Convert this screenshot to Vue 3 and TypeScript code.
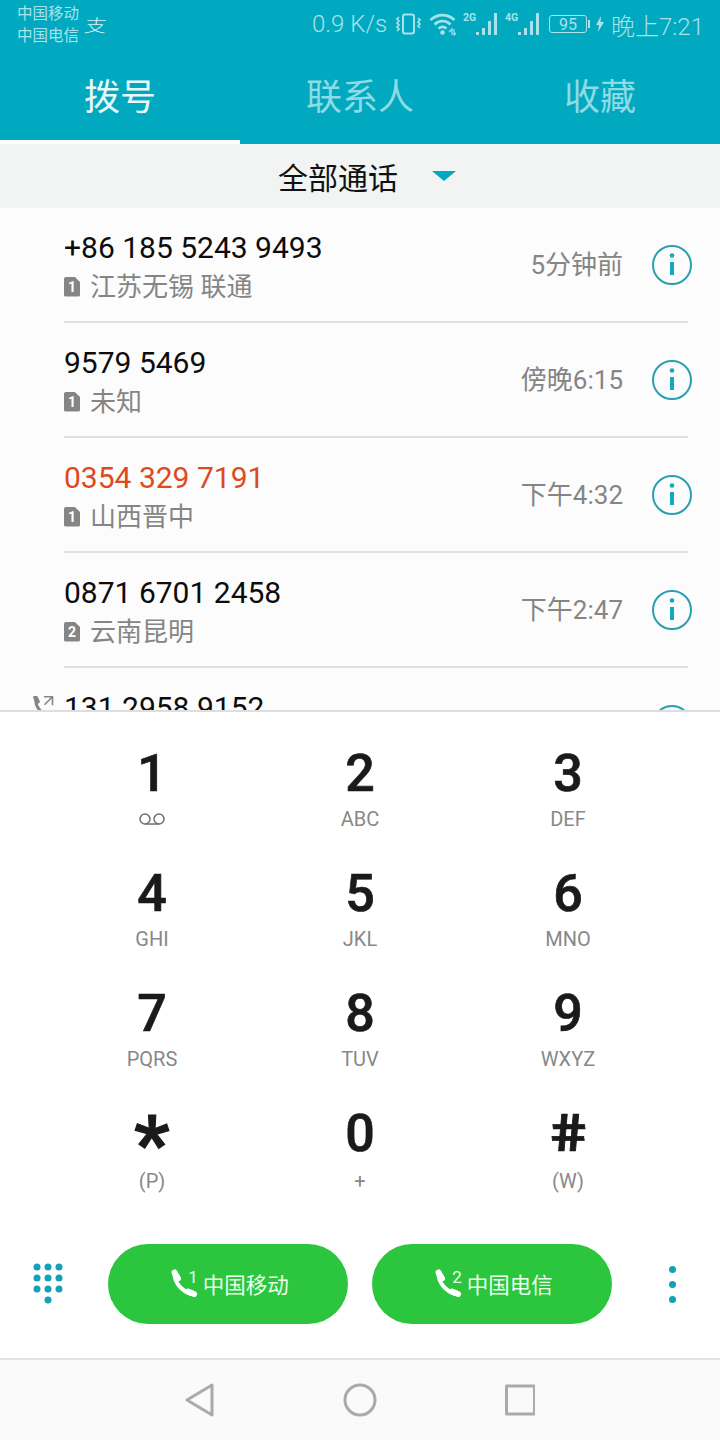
<script setup lang="ts">
type Call = { number: string; sim: number; place: string; time: string; missed?: boolean };

const tabs = ["拨号", "联系人", "收藏"];

const calls: Call[] = [
	{ number: "+86 185 5243 9493", sim: 1, place: "江苏无锡 联通", time: "5分钟前" },
	{ number: "9579 5469", sim: 1, place: "未知", time: "傍晚6:15" },
	{ number: "0354 329 7191", sim: 1, place: "山西晋中", time: "下午4:32", missed: true },
	{ number: "0871 6701 2458", sim: 2, place: "云南昆明", time: "下午2:47" },
	{ number: "131 2958 9152", sim: 1, place: "", time: "" },
];

const keys = [
	{ digit: "1", sub: "" },
	{ digit: "2", sub: "ABC" },
	{ digit: "3", sub: "DEF" },
	{ digit: "4", sub: "GHI" },
	{ digit: "5", sub: "JKL" },
	{ digit: "6", sub: "MNO" },
	{ digit: "7", sub: "PQRS" },
	{ digit: "8", sub: "TUV" },
	{ digit: "9", sub: "WXYZ" },
	{ digit: "*", sub: "(P)" },
	{ digit: "0", sub: "+" },
	{ digit: "#", sub: "(W)" },
];

const sims = [
	{ id: 1, name: "中国移动" },
	{ id: 2, name: "中国电信" },
];

const padDots = [
	[6, 6], [17, 6], [28, 6],
	[6, 17], [17, 17], [28, 17],
	[6, 28], [17, 28], [28, 28],
	[17, 39],
];
</script>

<template>
	<div class="phone">
		<header class="top">
			<div class="status">
				<div class="carriers">
					<span>中国移动</span>
					<span>中国电信</span>
				</div>
				<span class="alipay">支</span>
				<div class="status-right">
					<span class="speed">0.9 K/s</span>
					<svg class="st-vibrate" width="26" height="24" viewBox="0 0 26 24" fill="none" stroke="currentColor">
						<rect x="8" y="2.500" width="11" height="19" rx="2" stroke-width="2" />
						<path d="M4 5L2 7l2 2-2 2 2 2-2 2 2 2-2 2M23 6l2 2-2 2 2 2-2 2 2 2" stroke-width="1.700" />
					</svg>
					<svg class="st-wifi" width="28" height="24" viewBox="0 0 28 24" fill="none" stroke="currentColor" stroke-width="2.600">
						<path d="M1.500 8C8.500 1.500 18.500 1.500 25.500 8M5.500 12.500C10.500 8 16.500 8 21.500 12.500M9.500 16.500c2.500-2 5.500-2 8 0" />
						<circle cx="13.500" cy="20.500" r="2.300" fill="currentColor" stroke="none" />
						<path d="M20 20l3-3v6M25 17v6l2-2" stroke-width="1.200" />
					</svg>
					<div v-for="n in ['2G', '4G']" :key="n" class="st-signal">
						<span class="net">{{ n }}</span>
						<svg width="21" height="24" viewBox="0 0 21 24" fill="currentColor">
							<rect x="0" y="20" width="3" height="3" />
							<rect x="6" y="16" width="3" height="7" />
							<rect x="12" y="9" width="3" height="14" />
							<rect x="18" y="1" width="3" height="22" />
						</svg>
					</div>
					<div class="battery"><span>95</span></div>
					<span class="nub"></span>
					<svg class="bolt" width="8" height="16" viewBox="0 0 8 16" fill="currentColor">
						<path d="M5 0L0 9h3l-1 7 6-10H4.500z" />
					</svg>
					<span class="clock">晚上7:21</span>
				</div>
			</div>
			<nav class="tabs">
				<div v-for="(t, i) in tabs" :key="t" class="tab" :class="{ active: i === 0 }">{{ t }}</div>
			</nav>
		</header>

		<div class="filter">
			<span>全部通话</span>
			<i class="caret"></i>
		</div>

		<div class="list">
			<div v-for="c in calls" :key="c.number" class="row">
				<svg v-if="!c.place" class="outgoing" width="22" height="20" viewBox="0 0 22 20" fill="none" stroke="#858585">
					<path d="M4 3C3 9 7 15 13 18" stroke-width="3" />
					<path d="M3.500 1.500l2 4M11 17l4 2" stroke-width="4.500" stroke-linecap="round" />
					<path d="M12 .800h8.500v8.500M20.500 .800l-8 8" stroke-width="1.600" />
				</svg>
				<div class="row-main">
					<div class="number" :class="{ missed: c.missed }">{{ c.number }}</div>
					<div class="place">
						<span class="sim"><b>{{ c.sim }}</b></span>
						<span>{{ c.place }}</span>
					</div>
				</div>
				<span class="time">{{ c.time }}</span>
				<svg class="info" width="40" height="40" viewBox="0 0 40 40">
					<circle cx="20" cy="20" r="19" fill="none" stroke="#2a9fb0" stroke-width="2" />
					<circle cx="20" cy="10.500" r="2.300" fill="#12a8bd" />
					<rect x="18" y="17" width="4" height="13" fill="#12a8bd" />
				</svg>
			</div>
		</div>

		<div class="pad">
			<div class="keys">
				<div v-for="k in keys" :key="k.digit" class="key">
					<span class="digit" :class="{ star: k.digit === '*', hash: k.digit === '#' }">{{ k.digit }}</span>
					<svg v-if="k.digit === '1'" class="voicemail" width="28" height="12" viewBox="0 0 28 12" fill="none" stroke="#6f6f6f" stroke-width="1.500">
						<circle cx="7" cy="6" r="5" />
						<circle cx="21" cy="6" r="5" />
						<path d="M7 11h14" />
					</svg>
					<span v-else class="sub" :class="{ paren: k.sub.startsWith('(') || k.sub === '+' }">{{ k.sub }}</span>
				</div>
			</div>
			<div class="actions">
				<svg class="dialpad" width="34" height="46" viewBox="0 0 34 46" fill="#12a1bb">
					<circle v-for="d in padDots" :key="d.join()" :cx="d[0]" :cy="d[1]" r="3.500" />
				</svg>
				<div class="buttons">
					<button v-for="s in sims" :key="s.id" class="call" type="button">
						<svg width="28" height="28" viewBox="0 0 28 28" fill="none" stroke="#fff" stroke-linecap="round">
							<path d="M4.500 6C5 14 12 22 21 25" stroke-width="4" />
							<path d="M4.500 3.500l3.500 6M18 22.500l6 2.500" stroke-width="6" />
						</svg>
						<sup>{{ s.id }}</sup>
						<span>{{ s.name }}</span>
					</button>
				</div>
				<div class="more"><i></i><i></i><i></i></div>
			</div>
		</div>

		<footer class="nav">
			<svg width="32" height="36" viewBox="0 0 32 36" fill="none" stroke="#aaa" stroke-width="3" stroke-linejoin="round">
				<path d="M27 3L2 18l25 15z" />
			</svg>
			<svg width="34" height="34" viewBox="0 0 34 34" fill="none" stroke="#aaa" stroke-width="3">
				<circle cx="17" cy="17" r="15" />
			</svg>
			<svg width="32" height="32" viewBox="0 0 32 32" fill="none" stroke="#aaa" stroke-width="3" stroke-linejoin="round">
				<rect x="3.500" y="2" width="28" height="28" />
			</svg>
		</footer>
	</div>
</template>

<style>
html, body {
	margin: 0;
	background: #fff;
}
</style>

<style scoped>
.phone {
	width: 720px;
	height: 1440px;
	display: flex;
	flex-direction: column;
	overflow: hidden;
	font-family: Roboto, "Noto Sans CJK SC", sans-serif;
	background: #fff;
}

.top {
	height: 144px;
	background: #00a9bf;
	display: flex;
	flex-direction: column;
}

.status {
	height: 48px;
	display: flex;
	align-items: center;
	padding: 0 16px 0 17px;
	color: #a8e2ea;
}

.carriers {
	display: flex;
	flex-direction: column;
	font-size: 15.500px;
	line-height: 22px;
	margin-top: 2px;
}

.alipay {
	display: inline-block;
	font-size: 22px;
	font-weight: 300;
	margin-left: 6px;
	color: #d8f2f5;
	transform: skewX(-10deg) scaleY(.8);
}

.status-right {
	margin-left: auto;
	display: flex;
	align-items: center;
}

.speed {
	font-size: 24px;
	font-weight: 300;
	width: 83px;
}

.st-vibrate {
	margin-right: 8px;
}

.st-wifi {
	margin-right: 6px;
}

.st-signal {
	position: relative;
	width: 34px;
	height: 24px;
	margin-right: 8px;
	display: flex;
	justify-content: flex-end;
}

.net {
	position: absolute;
	left: 0;
	top: 1px;
	font-size: 10.500px;
	font-weight: 700;
	line-height: 10px;
}

.battery {
	width: 38px;
	height: 18px;
	border: 1.500px solid currentColor;
	border-radius: 3px;
	box-sizing: border-box;
	display: flex;
	align-items: center;
	justify-content: center;
	font-size: 16px;
	margin-left: 2px;
}

.nub {
	width: 2px;
	height: 8px;
	margin: 0 6px 0 1px;
	background: currentColor;
}

.bolt {
	margin-right: 7px;
}

.clock {
	font-size: 24px;
	font-weight: 300;
}

.tabs {
	flex: 1;
	display: flex;
}

.tab {
	flex: 1;
	height: 96px;
	box-sizing: border-box;
	padding-bottom: 4px;
	display: flex;
	align-items: center;
	justify-content: center;
	font-size: 36px;
	color: #8cdbe5;
}

.tab.active {
	color: #e9f9fb;
	border-bottom: 4px solid #fff;
	padding-bottom: 0;
}

.filter {
	height: 64px;
	background: #f2f3f3;
	display: flex;
	align-items: center;
	justify-content: center;
	gap: 34px;
	font-size: 30px;
	color: #111;
	padding-left: 14px;
}

.caret {
	width: 0;
	height: 0;
	border-left: 12px solid transparent;
	border-right: 12px solid transparent;
	border-top: 10px solid #00a9bf;
}

.list {
	height: 502px;
	overflow: hidden;
	background: #fcfcfc;
}

.row {
	position: relative;
	height: 115px;
	box-sizing: border-box;
	margin: 0 32px 0 64px;
	border-bottom: 2px solid #e0e0e0;
	display: flex;
	align-items: center;
}

.outgoing {
	position: absolute;
	left: -32px;
	top: 28px;
}

.row-main {
	flex: 1;
	padding-top: 4px;
}

.number {
	font-size: 30px;
	line-height: 36px;
	color: #0c0c0c;
}

.number.missed {
	color: #de4a1d;
}

.place {
	display: flex;
	align-items: center;
	font-size: 26px;
	line-height: 34px;
	min-height: 34px;
	margin-top: 4px;
	color: #858585;
}

.sim {
	flex-shrink: 0;
	width: 16px;
	height: 20px;
	margin-right: 10px;
	background: #858585;
	border-radius: 2px;
	clip-path: polygon(0 0, 65% 0, 100% 28%, 100% 100%, 0 100%);
	color: #fff;
	display: flex;
	align-items: center;
	justify-content: center;
}

.sim b {
	font-size: 14px;
	line-height: 1;
}

.time {
	font-size: 26px;
	color: #858585;
	margin: 0 29px 4px 0;
}

.info {
	margin-right: -4px;
}

.pad {
	flex: 1;
	border-top: 2px solid #dedede;
	display: flex;
	flex-direction: column;
}

.keys {
	display: grid;
	grid-template-columns: repeat(3, 208px);
	grid-auto-rows: 120px;
	padding: 0 48px;
}

.key {
	display: flex;
	flex-direction: column;
	align-items: center;
	padding-top: 32px;
	box-sizing: border-box;
}

.digit {
	display: inline-block;
	font-size: 52px;
	font-weight: 500;
	-webkit-text-stroke: 0.7px #1a1a1a;
	line-height: 60px;
	color: #1a1a1a;
}

.digit.star {
	font-weight: 700;
	line-height: 30px;
	margin: 15px 0;
	transform: translateY(8px) scale(1.5);
	transform-origin: 50% 8px;
}

.digit.hash {
	font-weight: 700;
	transform: skewX(7deg) scaleX(1.2);
}

.sub {
	font-size: 20px;
	line-height: 24px;
	margin-top: 3px;
	color: #888;
}

.sub.paren {
	margin-top: 5px;
}

.voicemail {
	margin-top: 9px;
}

.actions {
	margin-top: 52px;
	height: 80px;
	display: flex;
	align-items: center;
}

.dialpad {
	margin-left: 31px;
}

.buttons {
	margin-left: 43px;
	display: flex;
	gap: 24px;
}

.call {
	width: 240px;
	height: 80px;
	border: none;
	border-radius: 40px;
	background: #2bc63e;
	color: #eaffea;
	font-family: inherit;
	font-size: 21.500px;
	display: flex;
	align-items: center;
	justify-content: center;
	padding: 0 0 2px 3px;
}

.call sup {
	font-size: 17px;
	line-height: 1;
	align-self: flex-start;
	margin: 25px 5px 0 -10px;
}

.more {
	margin-left: 57px;
	display: flex;
	flex-direction: column;
	gap: 8px;
}

.more i {
	width: 7px;
	height: 7px;
	border-radius: 50%;
	background: #12a1bb;
}

.nav {
	height: 80px;
	background: #fafafa;
	border-top: 2px solid #e2e2e2;
	display: flex;
	align-items: center;
	justify-content: center;
	gap: 126px;
}
</style>
